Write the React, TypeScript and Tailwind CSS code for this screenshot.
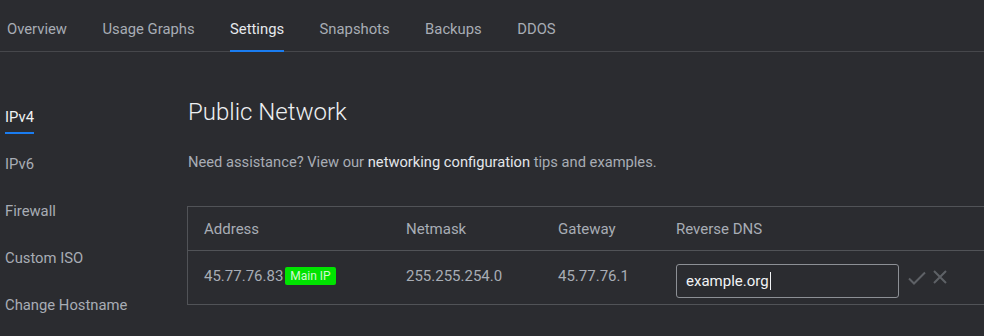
const tabs = ["Overview", "Usage Graphs", "Settings", "Snapshots", "Backups", "DDOS"];
const sideItems = ["IPv4", "IPv6", "Firewall", "Custom ISO", "Change Hostname"];

function CheckIcon() {
  return (
    <svg width="18" height="14" viewBox="0 0 18 14" fill="none" aria-hidden="true">
      <path d="M1 7.5L6 12.5L17 1.5" stroke="#5e6166" strokeWidth="2" />
    </svg>
  );
}

function CloseIcon() {
  return (
    <svg width="14" height="14" viewBox="0 0 14 14" fill="none" aria-hidden="true">
      <path d="M1 1L13 13M13 1L1 13" stroke="#5e6166" strokeWidth="2" />
    </svg>
  );
}

export default function App() {
  return (
    <div
      className="w-[984px] h-[336px] overflow-hidden bg-[#2b2c30] text-[15px] text-[#a8adb5]"
      style={{ fontFamily: "Roboto, 'Liberation Sans', sans-serif" }}
    >
      <nav className="flex h-[52px] gap-[35.5px] pl-[7px] text-[14.8px] shadow-[inset_0_-1px_0_#46474b]">
        {tabs.map((t) => (
          <div
            key={t}
            className={
              t === "Settings"
                ? "flex items-center h-full pt-[8px] border-b-2 border-[#1a7cf0] text-[#e6e9ed]"
                : "flex items-center h-full pt-[8px] border-b-2 border-transparent"
            }
          >
            {t}
          </div>
        ))}
      </nav>
      <div className="flex">
        <aside className="w-[188px] shrink-0 pt-[55px] pl-[5px] text-[14.8px]">
          {sideItems.map((s) => (
            <div key={s} className="h-[47px] leading-5">
              {s === "IPv4" ? (
                <span className="relative inline-block text-[#f1f3f5]">
                  {s}
                  <span className="absolute left-0 right-0 top-[25px] h-[2px] bg-[#1a7cf0]" />
                </span>
              ) : (
                <span>{s}</span>
              )}
            </div>
          ))}
        </aside>
        <main className="flex-1 pt-[44px]">
          <h1 className="text-2xl leading-8 font-light text-[#eef0f2]">Public Network</h1>
          <p className="mt-[24px] leading-5 text-[14.7px]">
            Need assistance? View our{" "}
            <span className="text-[#e3e6ea]">networking configuration</span> tips and examples.
          </p>
          <div className="mt-[34px] -ml-px w-[830px] border border-[#515357]">
            <div className="grid grid-cols-[218px_152px_118px_1fr] h-[44px] items-center border-b border-[#515357] leading-5">
              <div className="pl-4">Address</div>
              <div>Netmask</div>
              <div>Gateway</div>
              <div>Reverse DNS</div>
            </div>
            <div className="grid grid-cols-[218px_152px_118px_1fr] h-[53px] items-start leading-5">
              <div className="pl-4 pt-[15px] flex items-center gap-[2px]">
                <span>45.77.76.83</span>
                <span className="h-[18px] px-[5px] rounded-[2px] bg-[#00e300] text-[#d4f5d0] text-xs leading-[18px]">
                  Main IP
                </span>
              </div>
              <div className="pt-[15px]">255.255.254.0</div>
              <div className="pt-[15px]">45.77.76.1</div>
              <div className="pt-[13px] flex items-start">
                <div className="flex items-center w-[223px] h-[34px] rounded-[3px] border border-[#8d9095] pl-[9px] text-[#f1f3f5]">
                  example.org
                  <span className="ml-px w-px h-[18px] bg-[#f1f3f5]" />
                </div>
                <div className="ml-[9px] mt-[7px]">
                  <CheckIcon />
                </div>
                <div className="ml-[7px] mt-[6px]">
                  <CloseIcon />
                </div>
              </div>
            </div>
          </div>
        </main>
      </div>
    </div>
  );
}
